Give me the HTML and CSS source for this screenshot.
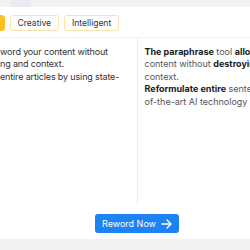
FILE: index.html
```html
<!DOCTYPE html>
<html lang="en">
<head>
    <meta charset="UTF-8">
    <meta name="viewport" content="width=device-width, initial-scale=1.0">
    <title>Paraphrasing Tool</title>
    <link rel="stylesheet" href="styles.css">
</head>
<body>

    <!-- Top tabs strip -->
    <div class="topbar">
        <span class="tab"></span>
    </div>

    <main class="card">
        <!-- Modes -->
        <div class="modes">
            <button class="mode active">Fluency</button>
            <button class="mode">Creative</button>
            <button class="mode">Intelligent</button>
        </div>

        <!-- Input / output panes -->
        <div class="panes">
            <div class="pane input">
                <span class="lead">The paraphrase tool allows you to re</span>word your content without<br>
                <span class="lead">destroying its meani</span>ng and context.<br>
                <span class="lead">Reformulate </span>entire articles by using state-
            </div>
            <div class="pane output">
                <strong>The paraphrase</strong> tool <strong>allows</strong> you to reword your<br>
                content without <strong>destroying</strong> its meaning and<br>
                context.<br>
                <strong>Reformulate entire</strong> sentences by using state-<br>
                of-the-art AI technology
            </div>
        </div>

        <div class="actions">
            <button class="reword">
                Reword Now
                <svg width="11" height="10" viewBox="0 0 11 10" fill="none" stroke="#fff" stroke-width="1.4" stroke-linecap="round" stroke-linejoin="round">
                    <path d="M1 5h9M6 1l4 4-4 4"/>
                </svg>
            </button>
        </div>
    </main>

</body>
</html>
```

FILE: styles.css
```css
body {
    margin: 0;
    width: 250px;
    height: 250px;
    overflow: hidden;
    background-color: #f2f2f4;
    font-family: 'Inter', 'Noto Sans', sans-serif;
    color: #333;
}
.topbar {
    height: 7px;
    padding-left: 11px;
}
.tab {
    display: block;
    width: 20px;
    height: 7px;
    background-color: #e8eaf4;
}
.card {
    background-color: #fff;
    height: 232px;
    overflow: hidden;
}
.modes {
    display: flex;
    gap: 5px;
    padding: 8px 0 6px;
    margin-left: -43px;
    border-bottom: 1px solid #f0f0f0;
}
.mode {
    height: 16px;
    padding: 0 7px;
    font-family: inherit;
    font-size: 8.5px;
    color: #333;
    background-color: #fff;
    border: 1px solid #fbe2a8;
    border-radius: 3px;
    flex-shrink: 0;
}
.mode.active {
    background-color: #fdc11f;
    border-color: #fdc11f;
}
.panes {
    display: flex;
    width: 620px;
    margin-left: -173px;
    height: 167px;
}
.pane {
    flex: 1;
    padding: 8px 7px 0;
    font-size: 9px;
    line-height: 12.4px;
    white-space: nowrap;
    overflow: hidden;
}
.input {
    color: #333;
    letter-spacing: -0.15px;
    border-right: 1px solid #eeeeee;
}
/* clipped start of each input line, so the visible part lines up */
.lead {
    display: inline-flex;
    justify-content: flex-end;
    width: 166px;
    overflow: hidden;
}
.output {
    color: #555;
}
.output strong {
    color: #1a1a1a;
    font-weight: 700;
}
.actions {
    display: flex;
    justify-content: center;
    padding-top: 9px;
    margin-left: 24px;
}
.reword {
    display: flex;
    align-items: center;
    gap: 5px;
    height: 19px;
    padding: 0 7px;
    font-family: inherit;
    font-size: 9px;
    color: #fff;
    background-color: #1f82f3;
    border: none;
    border-radius: 3px;
}
```
